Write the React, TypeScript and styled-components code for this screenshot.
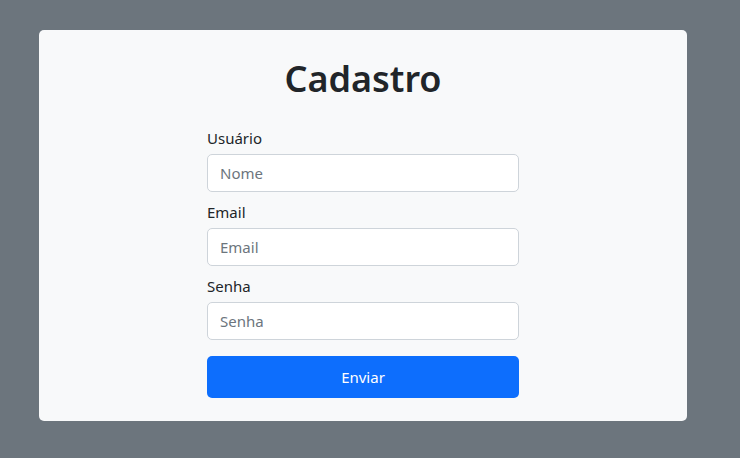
import React from "react";
import styled, { createGlobalStyle } from "styled-components";

const Global = createGlobalStyle`
  html, body { margin: 0; padding: 0; }
  body {
    background: #6c757d;
    font-family: "Noto Sans", "Open Sans", sans-serif;
    color: #212529;
  }
  * { box-sizing: border-box; }
`;

const Page = styled.div`
  padding: 30px 0 36px 39px;
`;

const Card = styled.div`
  width: 648px;
  height: 391px;
  background: #f8f9fa;
  border-radius: 5px;
  display: flex;
  flex-direction: column;
  align-items: center;
  padding-top: 25px;
`;

const Title = styled.h1`
  margin: 0;
  font-size: 36px;
  font-weight: 600;
  line-height: 48px;
`;

const Form = styled.form`
  width: 312px;
  margin-top: 23px;
  display: flex;
  flex-direction: column;
`;

const Group = styled.div`
  display: flex;
  flex-direction: column;
  margin-bottom: 8px;
`;

const Label = styled.label`
  font-size: 15px;
  line-height: 24px;
  margin-bottom: 4px;
`;

const Input = styled.input`
  height: 38px;
  width: 100%;
  border: 1px solid #ced4da;
  border-radius: 5px;
  background: #fff;
  padding: 0 12px;
  font-family: inherit;
  font-size: 15px;
  color: #212529;
  &::placeholder { color: #6c757d; opacity: 1; }
`;

const Button = styled.button`
  margin-top: 8px;
  height: 42px;
  width: 100%;
  border: none;
  border-radius: 5px;
  background: #0d6efd;
  color: #fff;
  font-family: inherit;
  font-size: 15px;
`;

export default function App() {
  return (
    <>
      <Global />
      <Page>
        <Card>
          <Title>Cadastro</Title>
          <Form onSubmit={(e) => e.preventDefault()}>
            <Group>
              <Label>Usuário</Label>
              <Input placeholder="Nome" />
            </Group>
            <Group>
              <Label>Email</Label>
              <Input placeholder="Email" />
            </Group>
            <Group>
              <Label>Senha</Label>
              <Input placeholder="Senha" type="password" />
            </Group>
            <Button type="submit">Enviar</Button>
          </Form>
        </Card>
      </Page>
    </>
  );
}
